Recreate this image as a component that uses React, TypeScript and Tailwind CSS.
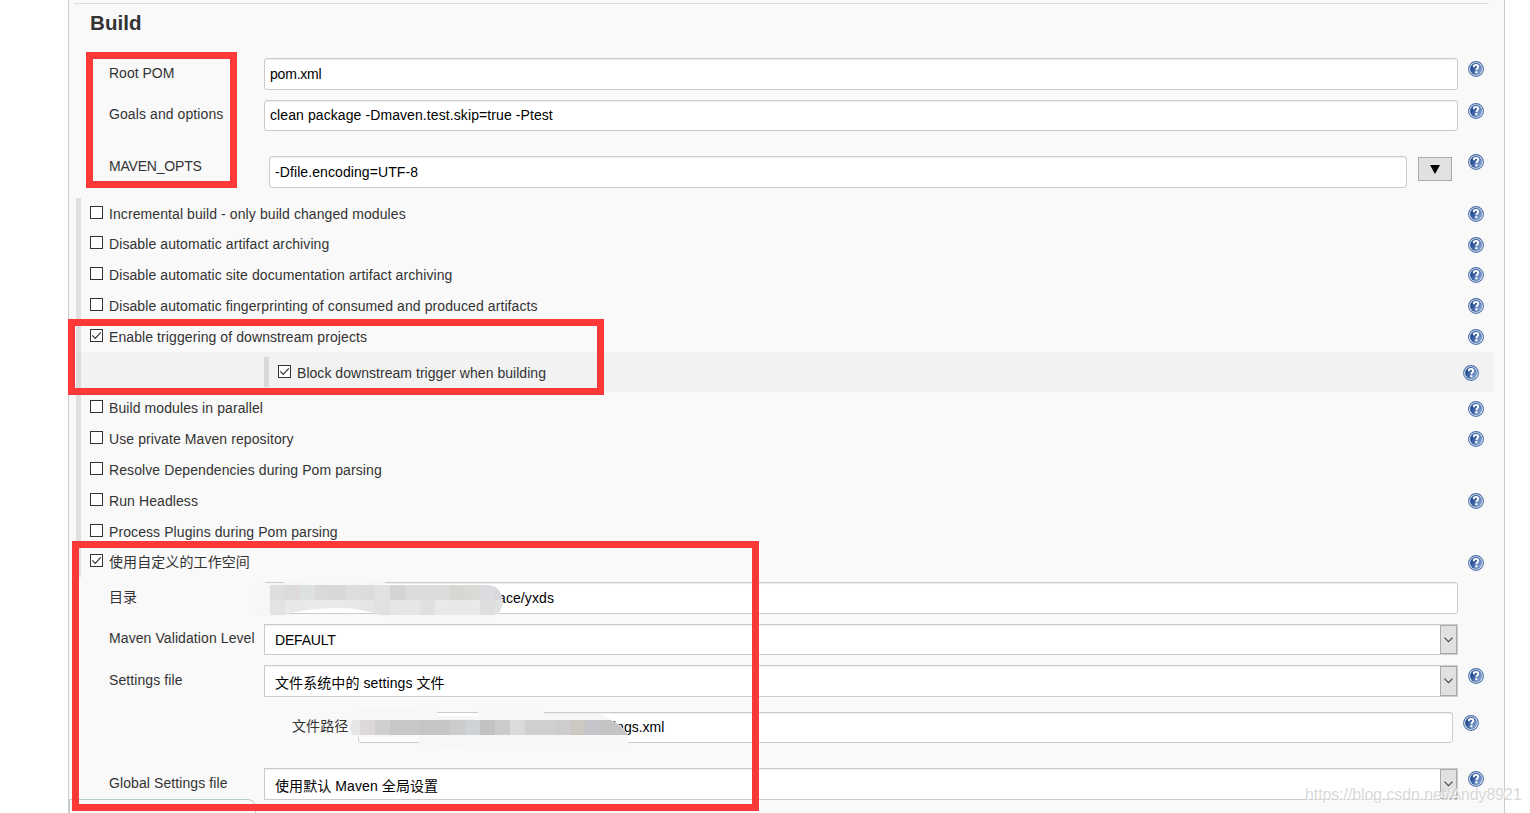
import type { ReactNode } from 'react'
import clsx from 'clsx'

//-------------------------------Local Types---------------------------------

type CheckRow = {
  label: string
  height: string
  checked?: boolean
  help?: string
}

//-------------------------------data---------------------------------

const topChecks: CheckRow[] = [
  { label: 'Incremental build - only build changed modules', height: 'h-[30px]', help: 'mt-2' },
  { label: 'Disable automatic artifact archiving', height: 'h-[31px]', help: 'mt-[9px]' },
  { label: 'Disable automatic site documentation artifact archiving', height: 'h-[31px]', help: 'mt-2' },
  { label: 'Disable automatic fingerprinting of consumed and produced artifacts', height: 'h-[31px]', help: 'mt-2' },
  { label: 'Enable triggering of downstream projects', height: 'h-[31px]', help: 'mt-2', checked: true },
]

const bottomChecks: CheckRow[] = [
  { label: 'Build modules in parallel', height: 'h-[31px]', help: 'mt-[9px]' },
  { label: 'Use private Maven repository', height: 'h-[31px]', help: 'mt-2' },
  { label: 'Resolve Dependencies during Pom parsing', height: 'h-[31px]' },
  { label: 'Run Headless', height: 'h-[31px]', help: 'mt-2' },
  { label: 'Process Plugins during Pom parsing', height: 'h-[30px]' },
  { label: '使用自定义的工作空间', height: 'h-[31px]', help: 'mt-[9px]', checked: true },
]

const dirTop = ['#dedede', '#dcdbda', '#dee1e2', '#dad9da', '#d8d7d5', '#dcdddf', '#dbdcdd', '#e3e0e2', '#d4d4d4', '#dcdadb', '#dcdcdd', '#dcdcdd', '#d7d6d2', '#d9d9d5', '#dcdce0', '#d8d8da']
const dirBottom = ['#e3e3e3', '#e8e8e8', '#e9e9e9', '#eaeaea', '#eaeaea', '#e8e8e8', '#e5e5e6', '#e1e1e1', '#e5e5e5', '#e6e6e6', '#e0e0e0', '#e9e9e9', '#e8e8e8', '#e9e9e9', '#dedee0', '#e1e1e2']
const pathCells = ['#ddd8da', '#d0d0cf', '#c8c7c7', '#c8c7c7', '#c6c5c6', '#c5c6c8', '#cccccd', '#cfd2d4', '#c4c1c3', '#cacccb', '#dbdbdc', '#d0d1cf', '#cfcfce', '#cdcdcd', '#cdc8c2', '#c5c6cc', '#c4c5c3', '#c6c6c6']

//-------------------------------pieces---------------------------------

const HelpIcon = ({ className }: { className?: string }) => (
  <svg className={clsx('size-4 shrink-0', className)} viewBox="0 0 16 16">
    <defs>
      <linearGradient id="help" x1="0" y1="0.2" x2="1" y2="0.8">
        <stop offset="0.25" stopColor="#285096" />
        <stop offset="1" stopColor="#8fb0d8" />
      </linearGradient>
    </defs>
    <circle cx="8" cy="8" r="7.4" fill="#fff" stroke="#4a70aa" strokeWidth="1.1" />
    <circle cx="8" cy="8" r="5.9" fill="url(#help)" stroke="#33599a" strokeWidth="0.3" />
    <path
      d="M5.9 6.2V4.6Q6.8 3.9 8.1 3.9Q10.2 3.9 10.2 5.7Q10.2 6.7 9.2 7.4Q8.4 8 8.4 9.2"
      fill="none"
      stroke="#fff"
      strokeWidth="1.9"
    />
    <rect x="7.3" y="10.2" width="2.1" height="2.1" fill="#fff" />
  </svg>
)

const Checkbox = ({ checked }: { checked?: boolean }) => (
  <span className="mt-2 size-[13px] shrink-0 border border-[#333] bg-white">
    {checked && (
      <svg className="block size-[11px]" viewBox="0 0 11 11">
        <path d="M1.3 5.4L4.2 8.3L9.8 2.4" fill="none" stroke="#333" strokeWidth="1.2" />
      </svg>
    )}
  </span>
)

const CheckLine = ({ row }: { row: CheckRow }) => (
  <div className={clsx('flex items-start pl-[9px]', row.height)}>
    <Checkbox checked={row.checked} />
    <span className="ml-1.5 mt-1.5 w-[1359px] leading-5">{row.label}</span>
    {row.help && <HelpIcon className={row.help} />}
  </div>
)

const TextBox = ({ className, children }: { className: string; children: ReactNode }) => (
  <div
    className={clsx(
      'mt-1 shrink-0 rounded-[3px] border border-[#ccc] bg-white text-black shadow-[inset_0_1px_1px_rgba(0,0,0,0.075)]',
      className,
    )}
  >
    {children}
  </div>
)

const SelectBox = ({ className, children }: { className: string; children: ReactNode }) => (
  <div
    className={clsx(
      'mt-1 flex w-[1194px] shrink-0 justify-between border border-[#ccc] bg-white pl-2.5 text-black shadow-[inset_0_1px_1px_rgba(0,0,0,0.075)]',
      className,
    )}
  >
    <span>{children}</span>
    <span className="flex w-[17px] items-center justify-center border border-[#aaa] bg-[#e1e1e1]">
      <svg className="h-1.5 w-[9px] shrink-0" viewBox="0 0 9 6">
        <path d="M0.5 0.7L4.5 4.7L8.5 0.7" fill="none" stroke="#444" strokeWidth="1.1" />
      </svg>
    </span>
  </div>
)

// label column + control + help button
const FieldRow = ({
  label,
  labelTop,
  height,
  help,
  children,
}: {
  label: string
  labelTop: string
  height: string
  help?: string
  children: ReactNode
}) => (
  <div className={clsx('flex items-start pl-10', height)}>
    <span className={clsx('w-[155px] shrink-0 whitespace-nowrap leading-5', labelTop)}>{label}</span>
    {children}
    {help && <HelpIcon className={clsx('ml-2.5', help)} />}
  </div>
)

// pixelated strokes that hide the start of the two paths
const DirMosaic = () => (
  <svg className="absolute left-[255px] top-[574px] h-11 w-[250px]" viewBox="255 574 250 44">
    <clipPath id="dirClip">
      <path d="M270 585H488Q496 585 500 592Q505 600 501 609Q498 615 493 615H380Q360 608 340 608Q305 608 285 615H270Z" />
    </clipPath>
    <path d="M257 583H283Q300 576 338 576Q370 577 385 582V600H270V616H257Q255 614 255 600Z" fill="#f7f7f7" />
    <path d="M258 610H286V616H262Z M377 612H501Q494 617 488 617L377 616Z" fill="#f7f7f7" />
    <path d="M283 600H380V613H286Z" fill="#fff" />
    <path d="M265 582.5H283M286 613.5H377" stroke="#ccc" />
    <g clipPath="url(#dirClip)">
      {dirTop.map((c, i) => (
        <rect key={i} x={270 + i * 15} y="585" width="15" height="15" fill={c} />
      ))}
      {dirBottom.map((c, i) => (
        <rect key={i} x={270 + i * 15} y="600" width="15" height="15" fill={c} />
      ))}
    </g>
  </svg>
)

const PathMosaic = () => (
  <svg className="absolute left-[349px] top-[706px] h-[46px] w-[282px]" viewBox="349 706 282 46">
    <clipPath id="pathClip">
      <path d="M353 720H611Q622 725 628 735H353Q347 728 353 720Z" />
    </clipPath>
    <path
      d="M351 720Q355 709 366 709L405 709L437 711V714H478V711Q510 708 544 711V714H600Q608 716 611 720Q622 725 628 735V750H470L419 744V737H356Z"
      fill="#f7f7f7"
    />
    <path d="M437 713H478V716H437Z" fill="#fff" />
    <path d="M437 712.5H478" stroke="#ccc" />
    <g clipPath="url(#pathClip)">
      <rect x="350" y="720" width="10" height="15" fill="#e5e6e8" />
      {pathCells.map((c, i) => (
        <rect key={i} x={360 + i * 15} y="720" width="15" height="15" fill={c} />
      ))}
    </g>
  </svg>
)

//------------------------------RENDER--------------------------------

export default function App() {
  return (
    <div className="relative h-[813px] w-[1530px] overflow-hidden bg-white font-['Liberation_Sans','Noto_Sans_CJK_SC',sans-serif] text-[14px] tracking-[0.09px] text-[#333]">
      <div className="ml-[68px] flex h-[813px] w-[1437px] flex-col border-x border-[#ccc] bg-[#f9f9f9] pt-[3px]">
        <div className="ml-[5px] h-px w-[1415px] shrink-0 bg-[#ddd]" />
        <h2 className="ml-[21px] h-[50px] shrink-0 pt-1.5 text-[20.5px] font-bold leading-[26px]">Build</h2>

        <FieldRow label="Root POM" labelTop="mt-[9px] tracking-normal" height="h-[42px]" help="mt-[7px]">
          <TextBox className="h-8 w-[1194px] pl-[5px] leading-[30px] tracking-[-0.2px]">pom.xml</TextBox>
        </FieldRow>
        <FieldRow label="Goals and options" labelTop="mt-2" height="h-14" help="mt-[7px]">
          <TextBox className="h-[31px] w-[1194px] pl-[5px] leading-7">clean package -Dmaven.test.skip=true -Ptest</TextBox>
        </FieldRow>
        <FieldRow label="MAVEN_OPTS" labelTop="mt-1 tracking-[-0.2px]" height="h-[46px]" help="mt-0.5">
          <div className="flex w-[1194px] shrink-0 items-start pl-[5px]">
            <TextBox className="h-8 w-[1138px] pl-[5px] leading-[30px]">-Dfile.encoding=UTF-8</TextBox>
            <button
              type="button"
              className="ml-[11px] mt-[5px] flex h-6 w-[34px] items-center justify-center border border-[#aaa] bg-[#e1e1e1]"
            >
              <svg className="h-[9px] w-2.5" viewBox="0 0 10 9">
                <path d="M0 0H10L5 9Z" fill="#000" />
              </svg>
            </button>
          </div>
        </FieldRow>

        {/* optional blocks, marked by the bar on their left */}
        <div className="ml-[7px]">
          <div className="border-l-[5px] border-[#e0e0e0]">
            {topChecks.map((row) => (
              <CheckLine key={row.label} row={row} />
            ))}
          </div>
          <div className="flex h-10 w-[1418px] border-l-[5px] border-[#dbdbdb] bg-[#f2f2f2] pl-[183px]">
            <div className="mt-[5px] h-[30px] w-[5px] bg-[#d9d9d9]" />
            <div className="flex items-start pl-[9px] pt-[5px]">
              <Checkbox checked />
              <span className="ml-1.5 mt-1.5 w-[1166px] leading-5 tracking-[0.04px]">
                Block downstream trigger when building
              </span>
              <HelpIcon className="mt-2" />
            </div>
          </div>
          <div className="border-l-[5px] border-[#e0e0e0]">
            {bottomChecks.map((row) => (
              <CheckLine key={row.label} row={row} />
            ))}
          </div>
        </div>

        <div className="mt-px">
          <FieldRow label="目录" labelTop="mt-[9px]" height="h-[42px]">
            <TextBox className="h-8 w-[1194px] pl-[233px] leading-[30px]">ace/yxds</TextBox>
          </FieldRow>
          <FieldRow label="Maven Validation Level" labelTop="mt-2" height="h-[41px]">
            <SelectBox className="h-[31px] leading-[30px] tracking-[-0.2px]">DEFAULT</SelectBox>
          </FieldRow>
          <FieldRow label="Settings file" labelTop="mt-[9px]" height="h-[47px]" help="mt-[7px]">
            <SelectBox className="h-8 leading-[34px]">文件系统中的 settings 文件</SelectBox>
          </FieldRow>
          <div className="flex h-14 items-start pl-[223px]">
            <span className="mt-2 w-[66px] shrink-0 leading-5">文件路径</span>
            <TextBox className="h-[31px] w-[1095px] pl-[254px] leading-7 tracking-normal">ings.xml</TextBox>
            <HelpIcon className="ml-2.5 mt-[7px]" />
          </div>
          <FieldRow label="Global Settings file" labelTop="mt-[9px]" height="h-[49px]" help="mt-[7px]">
            <SelectBox className="h-8 leading-[34px]">使用默认 Maven 全局设置</SelectBox>
          </FieldRow>
        </div>
      </div>

      <DirMosaic />
      <PathMosaic />

      {/* browser status bubble, cut by the bottom edge */}
      <div className="absolute left-[69px] top-[799px] h-5 w-[187px] rounded-tr-lg border border-[#b8cfc0] bg-[#f7f8f7]" />

      {/* highlight frames */}
      <div className="absolute left-[86px] top-[52px] h-[136px] w-[151px] border-[7px] border-[#fc3838]" />
      <div className="absolute left-[68px] top-[319px] h-[76px] w-[536px] border-[7px] border-[#fc3838]" />
      <div className="absolute left-[72px] top-[541px] h-[270px] w-[687px] border-[7px] border-[#fc3838]" />

      <span className="absolute left-[1305px] top-[785px] whitespace-nowrap text-[16px] leading-5 tracking-[-0.1px] text-[#cfcfcf]/80 [text-shadow:1px_1px_0_#fff]">
        https://blog.csdn.net/Andy8921
      </span>
    </div>
  )
}
